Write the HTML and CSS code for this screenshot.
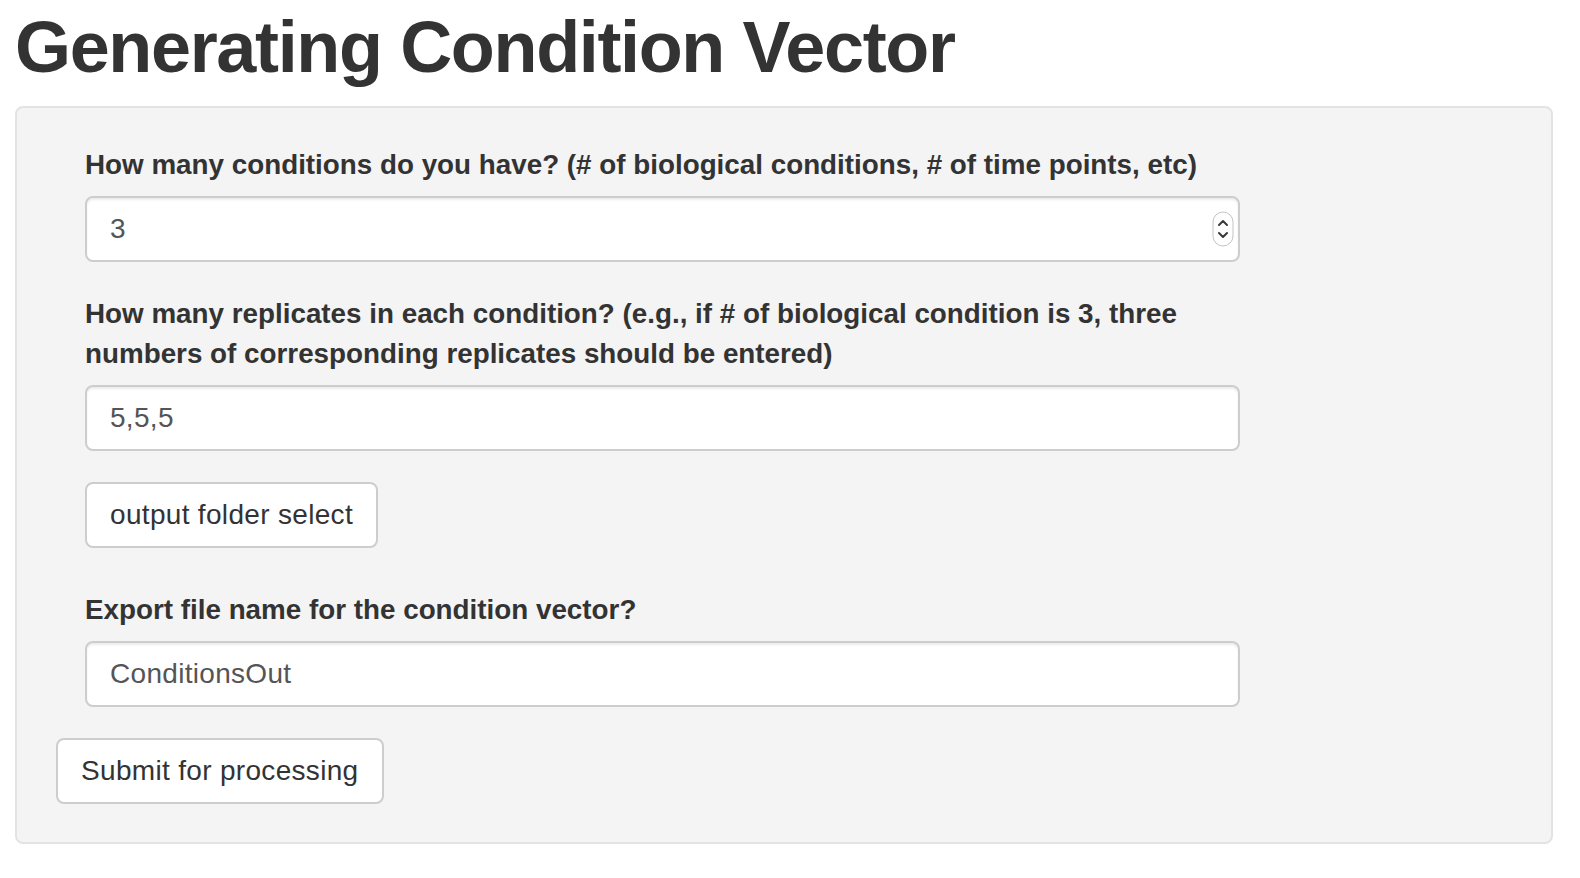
FILE: index.html
```html
<!DOCTYPE html>
<html>
<head>
<meta charset="utf-8">
<link rel="stylesheet" href="styles.css">
</head>
<body>
<div class="page">
  <h1 class="title">Generating Condition Vector</h1>
  <div class="well">
    <div class="fields">
      <div class="group">
        <label class="lbl">How many conditions do you have? (# of biological conditions, # of time points, etc)</label>
        <div class="num-wrap">
          <input class="ctl" type="text" value="3">
          <svg class="spin" width="22" height="36" viewBox="0 0 22 36">
            <rect x="1" y="1" width="20" height="34" rx="10" ry="10" fill="#fff" stroke="#c4c4c4" stroke-width="1"/>
            <path d="M7 14 L11 10 L15 14" fill="none" stroke="#3a3a3a" stroke-width="2" stroke-linecap="round" stroke-linejoin="round"/>
            <path d="M7 22 L11 26 L15 22" fill="none" stroke="#3a3a3a" stroke-width="2" stroke-linecap="round" stroke-linejoin="round"/>
          </svg>
        </div>
      </div>
      <div class="group">
        <label class="lbl">How many replicates in each condition? (e.g., if # of biological condition is 3, three numbers of corresponding replicates should be entered)</label>
        <input class="ctl" type="text" value="5,5,5">
      </div>
      <button class="btn btn-folder" type="button">output folder select</button>
      <div class="group group-export">
        <label class="lbl">Export file name for the condition vector?</label>
        <input class="ctl" type="text" value="ConditionsOut">
      </div>
    </div>
    <button class="btn btn-submit" type="button">Submit for processing</button>
  </div>
</div>
</body>
</html>
```

FILE: styles.css
```css
html, body {
  margin: 0;
  padding: 0;
  background: #fff;
}

body {
  font-family: "Liberation Sans", Arial, Helvetica, sans-serif;
  color: #333;
}

.page {
  padding: 8px 27px 0 15px;
}

.title {
  margin: 0 0 19px 0;
  font-size: 72px;
  line-height: 79px;
  font-weight: 700;
  color: #333;
  letter-spacing: -1.35px;
}

.well {
  background: #f4f4f4;
  border: 2px solid #e3e3e3;
  border-radius: 8px;
  padding: 37px 38px 38px 38px;
}

.fields {
  width: 1155px;
  margin-left: 30px;
}

.group {
  display: flex;
  flex-direction: column;
  align-items: stretch;
  margin-bottom: 31.5px;
}

.lbl {
  display: block;
  font-size: 27.8px;
  line-height: 40px;
  font-weight: 700;
  color: #333;
  margin-bottom: 11px;
}

.num-wrap {
  position: relative;
}

.ctl {
  display: block;
  box-sizing: border-box;
  width: 100%;
  height: 66px;
  margin: 0;
  padding: 0 23px;
  font-family: "Liberation Sans", Arial, Helvetica, sans-serif;
  font-size: 28px;
  letter-spacing: 0.3px;
  color: #555;
  background: #fff;
  border: 2px solid #cdcdcd;
  border-radius: 8px;
  box-shadow: inset 0 2px 2px rgba(0, 0, 0, 0.075);
  outline: none;
}

.spin {
  position: absolute;
  right: 6px;
  top: 15px;
}

.btn {
  display: block;
  box-sizing: border-box;
  width: max-content;
  height: 66px;
  margin: 0;
  padding: 0 23px;
  white-space: nowrap;
  font-family: "Liberation Sans", Arial, Helvetica, sans-serif;
  font-size: 28px;
  letter-spacing: 0.32px;
  color: #333;
  background: #fff;
  border: 2px solid #cdcdcd;
  border-radius: 8px;
  cursor: pointer;
}

.btn-folder {
  margin-top: 1px;
  margin-bottom: 41.5px;
}

.group-export {
  margin-bottom: 31.5px;
}

.btn-submit {
  margin-left: 1px;
}
```
